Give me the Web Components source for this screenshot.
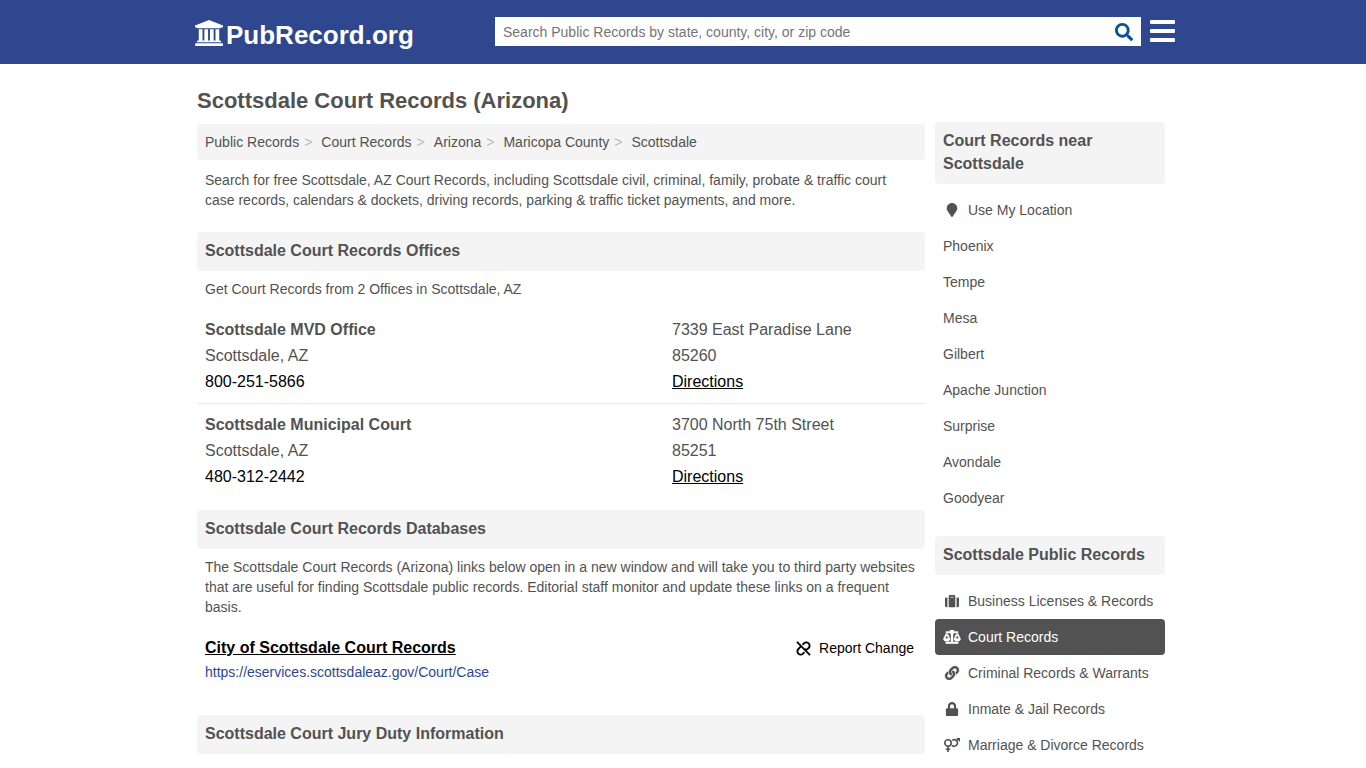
<!DOCTYPE html>
<html lang="en">
<head>
<meta charset="utf-8">
<meta name="viewport" content="width=device-width, initial-scale=1">
<title>Scottsdale Court Records (Arizona) | PubRecord.org</title>
<style>
  body { margin: 0; background: #fff; color: #525252; font: 14px/20px "Liberation Sans", Arial, sans-serif; }
</style>
</head>
<body>
<public-records-page></public-records-page>
<script>
const define = (name, html, setup) => {
  const template = document.createElement('template');
  template.innerHTML = html;
  customElements.define(name, class extends HTMLElement {
    constructor() {
      super();
      this.attachShadow({ mode: 'open' }).append(template.content.cloneNode(true));
    }
    connectedCallback() { if (setup) setup(this, this.shadowRoot); }
  });
};

const icons = {
  university: ['0 0 1920 1792', '<path d="M960 0l960 384v128h-128q0 26-20.500 45t-48.500 19H197q-28 0-48.500-19T128 512H0V384zM256 640h256v768h128V640h256v768h128V640h256v768h128V640h256v768h59q28 0 48.500 19t20.500 45v64H128v-64q0-26 20.500-45t48.500-19h59zM1851 1600q28 0 48.500 19t20.500 45v128H0v-128q0-26 20.500-45t48.500-19z"/>'],
  search: ['0 0 512 512', '<path d="M505 442.7L405.3 343c-4.5-4.5-10.6-7-17-7H372c27.6-35.3 44-79.7 44-128C416 93.1 322.9 0 208 0S0 93.1 0 208s93.1 208 208 208c48.3 0 92.7-16.4 128-44v16.3c0 6.4 2.5 12.5 7 17l99.7 99.7c9.4 9.4 24.6 9.4 33.9 0l28.3-28.3c9.4-9.4 9.4-24.6.1-34zM208 336c-70.7 0-128-57.2-128-128 0-70.7 57.2-128 128-128 70.7 0 128 57.2 128 128 0 70.7-57.2 128-128 128z"/>'],
  marker: ['0 0 384 512', '<path d="M172.268 501.67C26.97 291.031 0 269.413 0 192 0 85.961 85.961 0 192 0s192 85.961 192 192c0 77.413-26.97 99.031-172.268 309.67-9.535 13.774-29.93 13.773-39.464 0z"/>'],
  suitcase: ['0 0 512 512', '<path d="M136 480h240V80c0-26.5-21.5-48-48-48H184c-26.5 0-48 21.5-48 48v400zm64-384h112v32H200V96zm312 80v256c0 26.5-21.5 48-48 48h-40V128h40c26.5 0 48 21.5 48 48zM88 480H48c-26.5 0-48-21.5-48-48V176c0-26.5 21.5-48 48-48h40v352z"/>'],
  scales: ['0 0 640 512', '<path stroke="currentColor" stroke-width="14" d="M6 336c0 44 54 80 122 80s122-36 122-80c0-16 1-8-79-181-18-35-68-35-86 0C5 329 6 321 6 336zm122-142 64 118H64zM390 336c0 44 54 80 122 80s122-36 122-80c0-16 1-8-79-181-18-35-68-35-86 0-80 174-79 166-79 181zm122-142 64 118H448zM96 56h142a82 82 0 0 1 164 0h142v56H392a82 82 0 0 1-36 40v288h188v66H96v-66h188V152a82 82 0 0 1-36-40H96z"/>'],
  link: ['0 0 512 512', '<path stroke="currentColor" stroke-width="14" d="M326.612 185.391c59.747 59.809 58.927 155.698.36 214.59-.11.12-.24.25-.36.37l-67.2 67.2c-59.27 59.27-155.699 59.262-214.96 0-59.27-59.26-59.27-155.7 0-214.96l37.106-37.106c9.84-9.84 26.786-3.3 27.294 10.606.648 17.722 3.826 35.527 9.69 52.721 1.986 5.822.567 12.262-3.783 16.612l-13.087 13.087c-28.026 28.026-28.905 73.66-1.155 101.96 28.024 28.579 74.086 28.749 102.325.51l67.2-67.19c28.191-28.191 28.073-73.757 0-101.83-3.701-3.694-7.429-6.564-10.341-8.569a16.037 16.037 0 0 1-6.947-12.606c-.396-10.567 3.348-21.456 11.698-29.806l21.054-21.055c5.521-5.521 14.182-6.199 20.584-1.731a152.482 152.482 0 0 1 20.522 17.197zM467.547 44.449c-59.261-59.262-155.69-59.27-214.96 0l-67.2 67.2c-.12.12-.25.25-.36.37-58.566 58.892-59.387 154.781.36 214.59a152.454 152.454 0 0 0 20.521 17.196c6.402 4.468 15.064 3.789 20.584-1.731l21.054-21.055c8.35-8.35 12.094-19.239 11.698-29.806a16.037 16.037 0 0 0-6.947-12.606c-2.912-2.005-6.64-4.875-10.341-8.569-28.073-28.073-28.191-73.639 0-101.83l67.2-67.19c28.239-28.239 74.3-28.069 102.325.51 27.75 28.3 26.872 73.934-1.155 101.96l-13.087 13.087c-4.35 4.35-5.769 10.79-3.783 16.612 5.864 17.194 9.042 34.999 9.69 52.721.509 13.906 17.454 20.446 27.294 10.606l37.106-37.106c59.271-59.259 59.271-155.699.001-214.959z"/>'],
  lock: ['0 0 448 512', '<path d="M400 224h-24v-72C376 68.2 307.8 0 224 0S72 68.2 72 152v72H48c-26.5 0-48 21.5-48 48v192c0 26.5 21.5 48 48 48h352c26.5 0 48-21.5 48-48V272c0-26.5-21.5-48-48-48zm-104 0H152v-72c0-39.7 32.3-72 72-72s72 32.3 72 72v72z"/>'],
  marriage: ['0 0 16 14', '<g fill="none" stroke="currentColor" stroke-width="1.6"><circle cx="4" cy="5" r="3.200"/><path d="M4 8.200V14M1.800 11.200h4.400M8.300 2.300A3.200 3.200 0 1 1 8 7.300M12.300 3 14.600.9"/></g><path d="M12 0h4v4z"/>'],
  unlink: ['0 0 16 16', '<g fill="none" stroke="currentColor" stroke-width="2"><path d="M1 1l14 14M7 4l1.500-1.500a3.500 3.500 0 0 1 5 5L11 9.500l-1.500-1M9 12l-1.500 1.500a3.500 3.500 0 0 1-5-5L5 6"/></g>'],
  menu: ['0 0 25 22', '<rect width="25" height="4" rx="1"/><rect y="9" width="25" height="4" rx="1"/><rect y="18" width="25" height="4" rx="1"/>']
};

define('pr-icon', `
  <style>
    :host { display: inline-flex; width: 18px; height: 14px; flex: none; }
    svg { width: 100%; height: 100%; fill: currentColor; }
  </style>
  <svg aria-hidden="true"></svg>`, (el, root) => {
  const [box, shapes] = icons[el.getAttribute('name')];
  const svg = root.querySelector('svg');
  svg.setAttribute('viewBox', box);
  svg.innerHTML = shapes;
});

define('site-header', `
  <style>
    :host { display: block; background: #2e478f; }
    .bar { display: flex; align-items: center; box-sizing: border-box; max-width: 980px; height: 64px; margin: 0 auto; padding-bottom: 2px; }
    .logo { display: flex; align-items: flex-start; gap: 3px; flex: 1; padding: 8px 0 0 2px; color: #fff; font-size: 26px; line-height: 30px; font-weight: bold; text-decoration: none; }
    .logo pr-icon { width: 28px; height: 26px; }
    form { display: flex; flex: 0 0 646px; height: 29px; background: #fff; }
    input { flex: 1; min-width: 0; box-sizing: border-box; padding: 2px 8px 0; border: 0; background: none; font: inherit; color: #525252; outline-offset: 0; }
    input::placeholder { color: #757575; opacity: 1; }
    button { display: flex; align-items: center; padding: 0; border: 0; background: none; cursor: pointer; }
    .search { padding: 2px 8px 0; color: #0a5296; }
    .search pr-icon { width: 18px; height: 18px; }
    .menu { margin: 0 -2px 0 9px; color: #fff; }
    .menu pr-icon { width: 25px; height: 22px; }
    @media (max-width: 980px) { form { flex: 1 1 0; } .logo { flex: none; padding-right: 16px; } .menu { margin-right: 8px; } }
  </style>
  <header class="bar">
    <a class="logo" href="#"><pr-icon name="university"></pr-icon>PubRecord.org</a>
    <form role="search">
      <input type="text" aria-label="Search Public Records" placeholder="Search Public Records by state, county, city, or zip code">
      <button class="search" type="button" aria-label="Search"><pr-icon name="search"></pr-icon></button>
    </form>
    <button class="menu" type="button" aria-label="Menu"><pr-icon name="menu"></pr-icon></button>
  </header>`);

define('bread-crumbs', `
  <style>
    :host { display: block; padding: 8px; border-radius: 4px; background: #f4f4f4; }
    nav { display: flex; flex-wrap: wrap; }
  </style>
  <nav aria-label="Breadcrumb"><slot></slot></nav>`);

define('crumb-link', `
  <style>
    :host { display: flex; }
    a { color: inherit; text-decoration: none; }
    span { padding: 0 9px 0 5px; color: #bbb; }
    :host(:last-child) span { display: none; }
  </style>
  <a href="#"><slot></slot></a><span>&gt;</span>`);

define('section-title', `
  <style>
    :host { display: block; padding: 7px 8px 9px; border-radius: 4px; background: #f4f4f4; }
    h2 { margin: 0; font-size: 16px; line-height: 23px; }
  </style>
  <h2><slot></slot></h2>`);

define('office-entry', `
  <style>
    :host { display: grid; grid-template-columns: minmax(0, 1fr) 245px; padding: 8px; font-size: 16px; line-height: 26px; }
    :host(:not(:last-of-type)) { border-bottom: 1px solid #e8e8e8; }
    h3 { margin: 0; font: inherit; font-weight: bold; }
    ::slotted(a) { color: #000; }
    ::slotted([slot="phone"]) { text-decoration: none; }
  </style>
  <div><h3><slot name="name"></slot></h3><div><slot name="city"></slot></div><div><slot name="phone"></slot></div></div>
  <div><div><slot name="street"></slot></div><div><slot name="zip"></slot></div><div><slot name="map"></slot></div></div>`);

define('database-entry', `
  <style>
    :host { display: flex; justify-content: space-between; align-items: flex-start; padding: 0 8px; }
    h3 { margin: 0 0 1px; font-size: 16px; line-height: 26px; }
    h3 a { color: #000; }
    .url { color: #2e478f; text-decoration: none; }
    .report { display: flex; align-items: center; gap: 8px; padding: 0 3px; border: 0; background: none; color: #000; font: inherit; line-height: 26px; cursor: pointer; }
    .report pr-icon { width: 15px; height: 15px; }
  </style>
  <div><h3><a href="#"><slot></slot></a></h3><a class="url" href="#"><slot name="url"></slot></a></div>
  <button class="report" type="button"><pr-icon name="unlink"></pr-icon>Report Change</button>`);

define('side-link', `
  <style>
    :host { display: block; border-radius: 4px; }
    :host([current]) { background: #525252; color: #fff; }
    a { display: flex; align-items: center; gap: 7px; padding: 8px; color: inherit; text-decoration: none; }
  </style>
  <a href="#"><slot></slot></a>`, (el, root) => {
  const name = el.getAttribute('icon');
  if (name && !root.querySelector('pr-icon')) {
    const icon = document.createElement('pr-icon');
    icon.setAttribute('name', name);
    root.querySelector('a').prepend(icon);
  }
});

define('side-panel', `
  <style>
    :host { display: block; }
    nav { padding: 8px 0 20px; }
  </style>
  <section-title><slot name="title"></slot></section-title>
  <nav><slot></slot></nav>`);

define('public-records-page', `
  <style>
    :host { display: block; }
    .content { display: grid; grid-template-columns: minmax(0, 1fr) 230px; gap: 10px; align-items: start; max-width: 968px; margin: 0 auto; padding: 22px 4px 0 0; }
    h1 { margin: 0 0 8px; font-size: 22px; line-height: 30px; }
    p { margin: 0; padding: 0 8px; }
    .intro { padding: 10px 8px 22px; }
    .count { padding: 8px 8px 10px; }
    .offices { padding-bottom: 12px; }
    .note { padding: 8px 8px 18px; }
    database-entry { margin-bottom: 33px; }
    aside { padding-top: 36px; }
    aside side-panel:last-child { margin-bottom: -20px; }
  </style>
  <site-header></site-header>
  <div class="content">
    <main>
      <h1>Scottsdale Court Records (Arizona)</h1>
      <bread-crumbs>
        <crumb-link>Public Records</crumb-link><crumb-link>Court Records</crumb-link><crumb-link>Arizona</crumb-link><crumb-link>Maricopa County</crumb-link><crumb-link>Scottsdale</crumb-link>
      </bread-crumbs>
      <p class="intro">Search for free Scottsdale, AZ Court Records, including Scottsdale civil, criminal, family, probate &amp; traffic court case records, calendars &amp; dockets, driving records, parking &amp; traffic ticket payments, and more.</p>
      <section-title>Scottsdale Court Records Offices</section-title>
      <p class="count">Get Court Records from 2 Offices in Scottsdale, AZ</p>
      <div class="offices">
        <office-entry>
          <span slot="name">Scottsdale MVD Office</span><span slot="city">Scottsdale, AZ</span><a slot="phone" href="tel:800-251-5866">800-251-5866</a>
          <span slot="street">7339 East Paradise Lane</span><span slot="zip">85260</span><a slot="map" href="#">Directions</a>
        </office-entry>
        <office-entry>
          <span slot="name">Scottsdale Municipal Court</span><span slot="city">Scottsdale, AZ</span><a slot="phone" href="tel:480-312-2442">480-312-2442</a>
          <span slot="street">3700 North 75th Street</span><span slot="zip">85251</span><a slot="map" href="#">Directions</a>
        </office-entry>
      </div>
      <section-title>Scottsdale Court Records Databases</section-title>
      <p class="note">The Scottsdale Court Records (Arizona) links below open in a new window and will take you to third party websites that are useful for finding Scottsdale public records. Editorial staff monitor and update these links on a frequent basis.</p>
      <database-entry>City of Scottsdale Court Records<span slot="url">https://eservices.scottsdaleaz.gov/Court/Case</span></database-entry>
      <section-title>Scottsdale Court Jury Duty Information</section-title>
    </main>
    <aside>
      <side-panel>
        <span slot="title">Court Records near Scottsdale</span>
        <side-link icon="marker">Use My Location</side-link>
        <side-link>Phoenix</side-link>
        <side-link>Tempe</side-link>
        <side-link>Mesa</side-link>
        <side-link>Gilbert</side-link>
        <side-link>Apache Junction</side-link>
        <side-link>Surprise</side-link>
        <side-link>Avondale</side-link>
        <side-link>Goodyear</side-link>
      </side-panel>
      <side-panel>
        <span slot="title">Scottsdale Public Records</span>
        <side-link icon="suitcase">Business Licenses &amp; Records</side-link>
        <side-link icon="scales" current>Court Records</side-link>
        <side-link icon="link">Criminal Records &amp; Warrants</side-link>
        <side-link icon="lock">Inmate &amp; Jail Records</side-link>
        <side-link icon="marriage">Marriage &amp; Divorce Records</side-link>
      </side-panel>
    </aside>
  </div>`);
</script>
</body>
</html>
